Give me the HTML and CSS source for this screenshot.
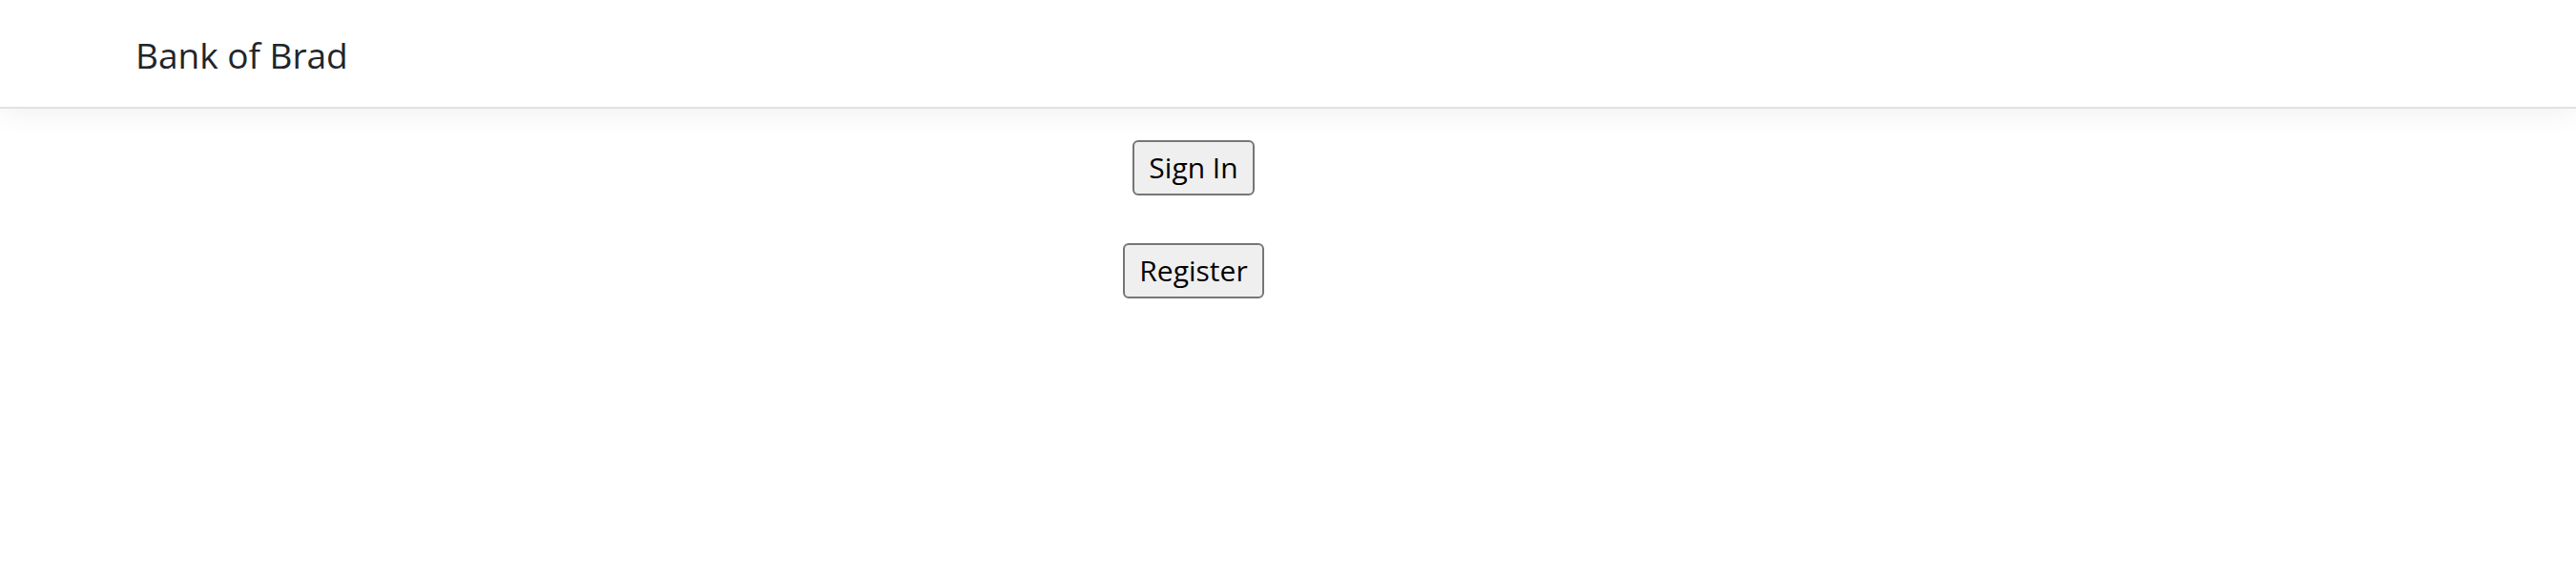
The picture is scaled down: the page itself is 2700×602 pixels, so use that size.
FILE: index.html
```html
<!DOCTYPE html>
<html lang="en">
<head>
<meta charset="utf-8">
<title>Bank of Brad</title>
<link rel="stylesheet" href="styles.css">
</head>
<body>
<header class="navbar">
  <span class="brand">Bank of Brad</span>
</header>
<main class="actions">
  <button class="btn" type="button">Sign In</button>
  <button class="btn" type="button">Register</button>
</main>
</body>
</html>
```
FILE: styles.css
```css
html, body {
  margin: 0;
  padding: 0;
  background: #ffffff;
}
body {
  font-family: "Open Sans", "Noto Sans", sans-serif;
  color: #212529;
}
.navbar {
  height: 112px;
  box-sizing: content-box;
  display: flex;
  align-items: center;
  padding-left: 142px;
  border-bottom: 2px solid #dee2e6;
  box-shadow: 0 8px 24px rgba(0, 0, 0, 0.05);
  background: #fff;
}
.brand {
  font-size: 37px;
  line-height: 60px;
  padding-top: 3px;
  color: #212529;
}
.actions {
  display: flex;
  flex-direction: column;
  align-items: center;
  gap: 50px;
  padding-top: 33px;
  padding-right: 198px;
}
.btn {
  font-family: "Open Sans", "Noto Sans", sans-serif;
  font-size: 30px;
  height: 58px;
  padding: 0 15px;
  color: #000;
  background: #efefef;
  border: 2px solid #767676;
  border-radius: 6px;
  line-height: 1;
}
```
